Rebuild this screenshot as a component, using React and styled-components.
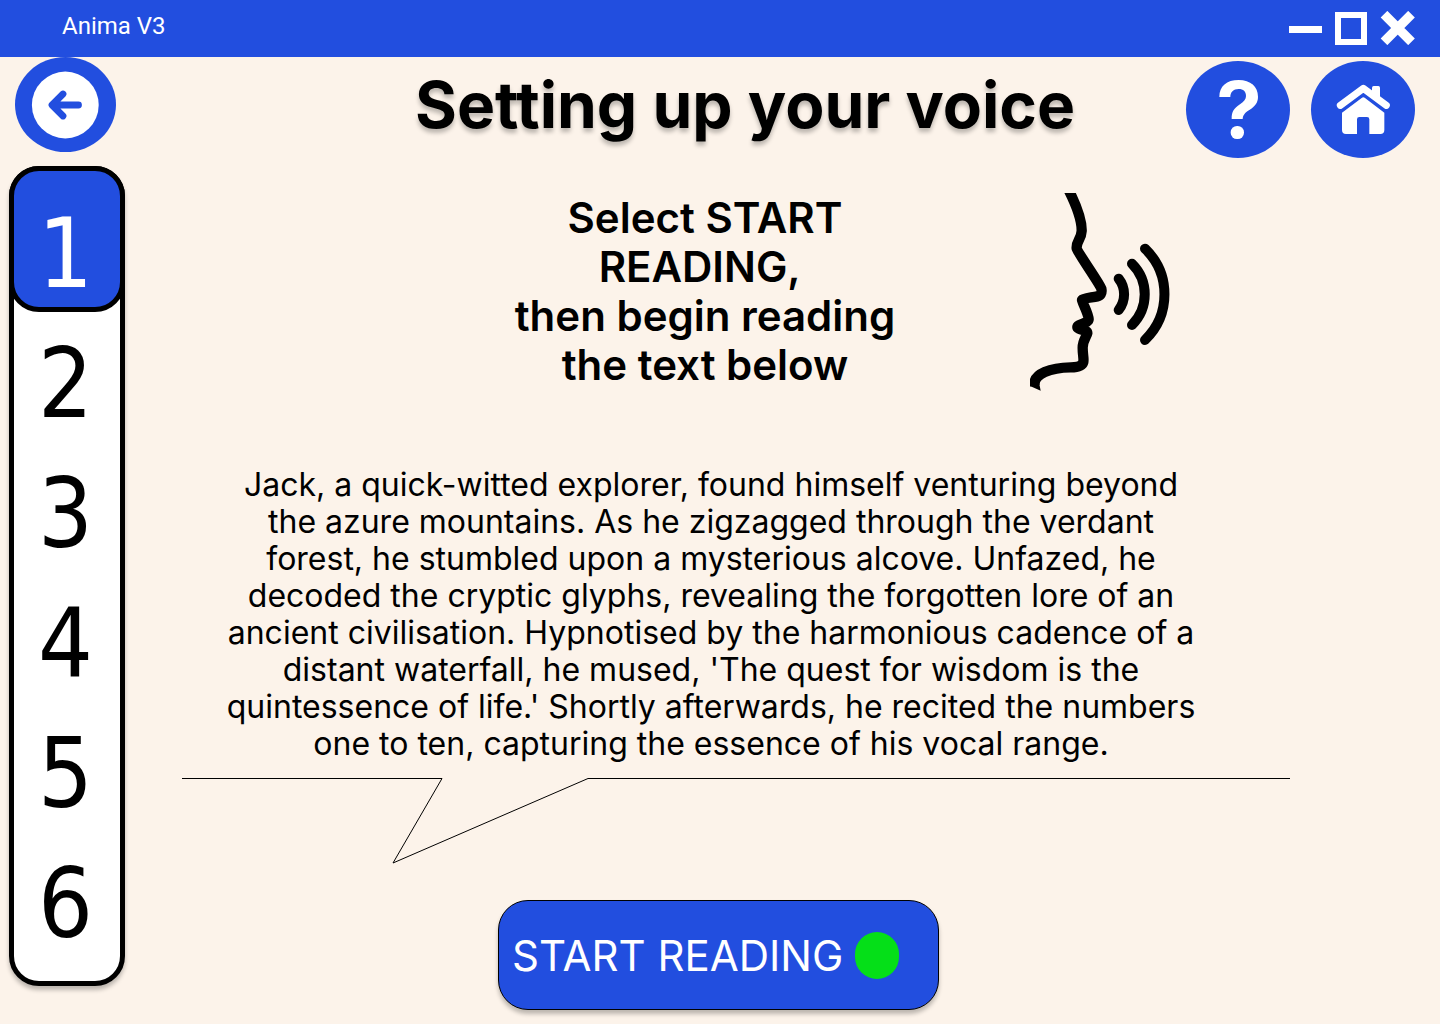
import React, { useState } from "react";
import styled, { createGlobalStyle } from "styled-components";

const BLUE = "#224edf";
const CREAM = "#fcf3ea";
const SHADOW = "0 4px 4px rgba(0, 0, 0, 0.25)";

const GlobalStyle = createGlobalStyle`
  *, *::before, *::after { box-sizing: border-box; }
  body {
    margin: 0;
    background: ${CREAM};
    color: #000;
    font-family: Inter, "Open Sans", sans-serif;
  }
  button { font: inherit; color: inherit; border: 0; padding: 0; background: none; cursor: pointer; }
  svg { display: block; }
`;

const Page = styled.div`
  min-height: 100vh;
  display: flex;
  flex-direction: column;
`;

const TitleBar = styled.header`
  height: 57px;
  padding: 0 25px 0 62px;
  display: flex;
  align-items: center;
  justify-content: space-between;
  background: ${BLUE};
  color: #fff;
`;

const AppName = styled.span`
  padding-bottom: 5px;
  font: 400 24px/28px Roboto, sans-serif;
`;

const WindowControls = styled.div`
  display: flex;
  gap: 13px;
  padding-bottom: 1px;
`;

const TopRow = styled.div`
  display: flex;
  align-items: flex-start;
  padding: 0 25px 0 15px;
`;

const RoundButton = styled.button`
  width: ${(p) => p.$width}px;
  height: ${(p) => p.$height}px;
  border-radius: 50%;
  background: ${BLUE};
  flex: none;
`;

const Title = styled.h1`
  flex: 1;
  margin: 0;
  padding: 8px 0 0 188px;
  text-align: center;
  white-space: nowrap;
  font-size: 64px;
  line-height: 80px;
  font-weight: 700;
  text-shadow: ${SHADOW};
`;

const TopActions = styled.div`
  display: flex;
  gap: 21px;
  padding-top: 4px;
`;

const Body = styled.div`
  display: flex;
  align-items: flex-start;
  padding: 8px 0 14px 9px;
`;

const Steps = styled.nav`
  flex: none;
  width: 116px;
  padding-bottom: 14px;
  border: 5px solid #000;
  border-radius: 30px;
  background: #fff;
  box-shadow: ${SHADOW};
  display: flex;
  flex-direction: column;
`;

const Step = styled.button`
  height: ${(p) => (p.$active ? 146 : 130)}px;
  margin: ${(p) => (p.$active ? "-5px -5px 5px" : "0")};
  padding: ${(p) => (p.$active ? "30px 3px 0 0" : "4px 3px 0 0")};
  border: ${(p) => (p.$active ? "5px solid #000" : "0")};
  border-radius: 30px;
  background: ${(p) => (p.$active ? BLUE : "transparent")};
  color: ${(p) => (p.$active ? "#fff" : "#000")};
  font: 400 96px/106px "DejaVu Sans Condensed", "DejaVu Sans", sans-serif;
`;

const Main = styled.main`
  flex: 1;
  min-width: 0;
  padding: 27px 150px 0 57px;
`;

const Prompt = styled.section`
  display: flex;
  justify-content: center;
  gap: 125px;
  padding-left: 203px;
`;

const PromptText = styled.p`
  width: 400px;
  margin: 0;
  text-align: center;
  white-space: nowrap;
  font-size: 42px;
  line-height: 49px;
  font-weight: 600;
`;

const Passage = styled.p`
  margin: 75px 50px 0 0;
  text-align: center;
  white-space: nowrap;
  font-size: 32px;
  line-height: 37px;
  font-weight: 400;
`;

const Pointer = styled.svg`
  width: 100%;
  margin-top: 16px;
`;

const StartRow = styled.div`
  display: flex;
  justify-content: center;
  padding: 36px 35px 0 0;
`;

const StartButton = styled.button`
  width: 441px;
  height: 110px;
  padding-left: 13px;
  display: flex;
  align-items: center;
  gap: 12px;
  border: 1px solid #000;
  border-radius: 30px;
  background: ${BLUE};
  color: #fff;
  font-size: 42px;
  line-height: 49px;
  box-shadow: ${SHADOW};
`;

const Dot = styled.span`
  width: 44px;
  height: 47px;
  border-radius: 22px;
  background: #05df18;
`;

const PASSAGE = [
  "Jack, a quick-witted explorer, found himself venturing beyond",
  "the azure mountains. As he zigzagged through the verdant",
  "forest, he stumbled upon a mysterious alcove. Unfazed, he",
  "decoded the cryptic glyphs, revealing the forgotten lore of an",
  "ancient civilisation. Hypnotised by the harmonious cadence of a",
  "distant waterfall, he mused, 'The quest for wisdom is the",
  "quintessence of life.' Shortly afterwards, he recited the numbers",
  "one to ten, capturing the essence of his vocal range.",
];

const PROMPT = ["Select START", "READING,\u00a0", "then begin reading", "the text below"];

const withBreaks = (lines) =>
  lines.map((line, i) => (
    <React.Fragment key={line}>
      {i > 0 && <br />}
      {line}
    </React.Fragment>
  ));

const MinimizeIcon = () => (
  <svg width="33" height="34" viewBox="0 0 33 34" aria-hidden="true">
    <rect y="15" width="33" height="7" fill="#fff" />
  </svg>
);

const MaximizeIcon = () => (
  <svg width="32" height="34" viewBox="0 0 32 34" aria-hidden="true">
    <rect x="3" y="4" width="26" height="27" fill="none" stroke="#fff" strokeWidth="6" />
  </svg>
);

const CloseIcon = () => (
  <svg width="35" height="34" viewBox="0 0 35 34" aria-hidden="true">
    <path d="M4 3.2 31.5 30.8M31.5 3.2 4 30.8" stroke="#fff" strokeWidth="9.4" />
  </svg>
);

const BackIcon = () => (
  <svg width="101" height="95" viewBox="0 0 101 95" aria-hidden="true">
    <circle cx="50.3" cy="48" r="33.4" fill="#fff" />
    <path
      d="M48 37 37 48l11 11M38 48h25.500"
      fill="none"
      stroke={BLUE}
      strokeWidth="6.8"
      strokeLinecap="round"
      strokeLinejoin="round"
    />
  </svg>
);

const HelpIcon = () => (
  <svg width="104" height="97" viewBox="78 183 312 291" fill="#fff" aria-hidden="true">
    <path d="M178 291C178 258 200 240 236 240C272 240 294 260 294 290C294 308 285 319 268 330C254 339 249 345 248 357H215C215 334 222 326 240 313C252 304 258 298 258 288C258 274 250 267 236 267C220 267 211 276 211 291Z" />
    <rect x="212" y="378" width="40" height="39" rx="19" />
  </svg>
);

const HomeIcon = () => (
  <svg width="104" height="97" viewBox="453 183 312 291" fill="#fff" aria-hidden="true">
    <path d="M541 316 610 265 679 316" fill="none" stroke="#fff" strokeWidth="21" strokeLinecap="round" strokeLinejoin="round" />
    <path d="M636 280V263Q636 258 641 258H655Q660 258 660 263V302Z" />
    <path d="M546 338 605 294Q610 290 615 294L673 338V390Q673 402 661 402H628V358Q628 351 621 351H598Q591 351 591 358V402H558Q546 402 546 390Z" />
  </svg>
);

const SpeakingFace = () => (
  <svg width="140" height="198" viewBox="60 39 420 594" fill="none" stroke="#000" role="img" aria-label="Person speaking">
    <path
      d="M176 30C198 74 216 120 215 153C214 178 198 184 200 205C202 217 268 308 274 326C277 340 271 347 262 349C244 353 220 355 216 360C216 366 236 402 236 418C236 430 202 432 202 441C202 450 232 448 232 459C230 470 218 480 218 503C218 526 222 534 220 546C216 560 200 562 182 562C125 563 68 580 74 617"
      strokeWidth="31"
      strokeLinejoin="round"
    />
    <path d="M60 612V618L92 632 88 612Z" fill="#000" stroke="none" />
    <g strokeWidth="30" strokeLinecap="round">
      <path d="M326 296A76 76 0 0 1 326 390" />
      <path d="M366 251A130 130 0 0 1 366 435" />
      <path d="M405 206A190 190 0 0 1 405 480" />
    </g>
  </svg>
);

export default function App() {
  const [step, setStep] = useState(1);
  return (
    <>
      <GlobalStyle />
      <Page>
        <TitleBar>
          <AppName>Anima V3</AppName>
          <WindowControls>
            <button type="button" aria-label="Minimize"><MinimizeIcon /></button>
            <button type="button" aria-label="Maximize"><MaximizeIcon /></button>
            <button type="button" aria-label="Close"><CloseIcon /></button>
          </WindowControls>
        </TitleBar>
        <TopRow>
          <RoundButton type="button" $width={101} $height={95} aria-label="Back"><BackIcon /></RoundButton>
          <Title>Setting up your voice</Title>
          <TopActions>
            <RoundButton type="button" $width={104} $height={97} aria-label="Help"><HelpIcon /></RoundButton>
            <RoundButton type="button" $width={104} $height={97} aria-label="Home"><HomeIcon /></RoundButton>
          </TopActions>
        </TopRow>
        <Body>
          <Steps aria-label="Steps">
            {[1, 2, 3, 4, 5, 6].map((n) => (
              <Step key={n} type="button" $active={n === step} onClick={() => setStep(n)}>
                {n}
              </Step>
            ))}
          </Steps>
          <Main>
            <Prompt>
              <PromptText>{withBreaks(PROMPT)}</PromptText>
              <SpeakingFace />
            </Prompt>
            <Passage>{withBreaks(PASSAGE)}</Passage>
            <Pointer viewBox="0 0 1108 86" fill="none" stroke="#000" aria-hidden="true">
              <path d="M0 .5H260L211 85 406 .5H1108" />
            </Pointer>
            <StartRow>
              <StartButton type="button">
                START READING
                <Dot />
              </StartButton>
            </StartRow>
          </Main>
        </Body>
      </Page>
    </>
  );
}
